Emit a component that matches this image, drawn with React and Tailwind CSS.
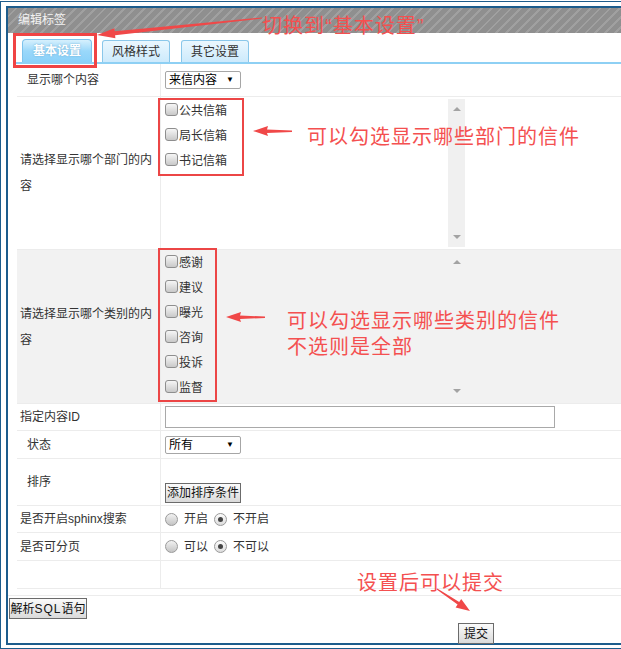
import React from 'react';

const FONT = "font-['Liberation_Sans','Noto_Sans_CJK_SC',sans-serif]";

const Checkbox = () => (
  <span className="mt-[4px] w-[13px] h-[13px] shrink-0 rounded-[3px] border border-[#8e8e8e] bg-gradient-to-b from-[#f6f6f6] to-[#c9c9c9]" />
);

const CheckItem = ({ label }) => (
  <div className="flex items-start h-[25px]">
    <Checkbox />
    <span className="ml-px leading-[25px] text-[12px] text-[#333]">{label}</span>
  </div>
);

const Radio = ({ checked }) => (
  <span
    className={`w-[13px] h-[13px] rounded-full border border-[#9a9a9a] flex items-center justify-center ${
      checked ? 'bg-gradient-to-b from-[#fdfdfd] to-[#dcdcdc]' : 'bg-gradient-to-b from-[#f2f2f2] to-[#c4c4c4]'
    }`}
  >
    {checked && <span className="w-[5px] h-[5px] rounded-full bg-[#444]" />}
  </span>
);

const FakeSelect = ({ value }) => (
  <div className="w-[76px] h-[18px] border border-[#a6a6a6] rounded-[2px] bg-white flex items-center justify-between pl-[3px] pr-[6px]">
    <span className="text-[12px] leading-[16px] text-black">{value}</span>
    <span className="text-[8px] leading-none text-black">▼</span>
  </div>
);

const ScrollTrack = ({ bg }) => (
  <div className={`w-[17px] my-[2px] flex flex-col justify-between items-center py-[8px] ${bg}`}>
    <span className="w-0 h-0 border-l-[4px] border-r-[4px] border-b-[4px] border-l-transparent border-r-transparent border-b-[#a3a3a3]" />
    <span className="w-0 h-0 border-l-[4px] border-r-[4px] border-t-[4px] border-l-transparent border-r-transparent border-t-[#a3a3a3]" />
  </div>
);

const Row = ({ label, indent, height, gray, children, labelLines }) => (
  <div className={`flex border-b border-[#ececec] ${gray ? 'bg-[#f2f2f2]' : ''} ${height}`}>
    <div
      className={`w-[144px] shrink-0 border-r border-[#ececec] flex items-center pr-[8px] text-[12px] text-[#333] ${
        indent ? 'pl-[10px]' : 'pl-[3px]'
      } ${labelLines ? 'leading-[26px]' : 'leading-[16px]'}`}
    >
      <span>{label}</span>
    </div>
    <div className="flex-1 flex">{children}</div>
  </div>
);

const Button = ({ children, className = '' }) => (
  <div
    className={`h-[20px] border border-[#6b6b6b] bg-gradient-to-b from-[#fbfbfb] to-[#dadada] flex items-center justify-center text-[12px] leading-none text-[#111] whitespace-nowrap ${className}`}
  >
    <span>{children}</span>
  </div>
);

export default function App() {
  const depts = ['公共信箱', '局长信箱', '书记信箱'];
  const kinds = ['感谢', '建议', '曝光', '咨询', '投诉', '监督'];

  return (
    <div className={`relative w-[621px] h-[649px] overflow-hidden bg-white ${FONT}`}>
      {/* outer frame */}
      <div className="mt-px w-[640px] h-[648px] border-l border-t border-b border-[#1d5c8c] pl-[5px] pt-[4px]">
        {/* inner panel */}
        <div className="h-[639px] border-l-2 border-t-2 border-b-2 border-[#1d5c8c]">
          {/* header */}
          <div className="h-[25px] pl-[10px] text-[12px] leading-[25px] text-[#f2f2f2] bg-[repeating-linear-gradient(135deg,#8f8f8f_0px,#8f8f8f_5px,#a0a0a0_5px,#a0a0a0_7px)]">
            编辑标签
          </div>

          {/* tabs */}
          <div className="ml-[6px] h-[31px] border-b-2 border-[#8ed0f4] flex items-end pl-[8px]">
            <div className="w-[70px] h-[23px] rounded-t-[4px] border border-b-0 border-[#7cc3ec] bg-gradient-to-b from-[#d6f0fd] via-[#9ad8fa] to-[#8ad1f9] flex items-center justify-center text-[12px] font-bold text-white [text-shadow:0_0_2px_#6aaad0]">
              基本设置
            </div>
            <div className="ml-[10px] w-[68px] h-[22px] rounded-t-[3px] border border-b-0 border-[#8ac7ea] bg-gradient-to-b from-[#eaf7fe] to-[#cdeafc] flex items-center justify-center text-[12px] text-[#333]">
              风格样式
            </div>
            <div className="ml-[11px] w-[68px] h-[22px] rounded-t-[3px] border border-b-0 border-[#8ac7ea] bg-gradient-to-b from-[#eaf7fe] to-[#cdeafc] flex items-center justify-center text-[12px] text-[#333]">
              其它设置
            </div>
          </div>

          {/* form table */}
          <div className="ml-[9px]">
            <Row label="显示哪个内容" indent height="h-[33px]">
              <div className="pl-[4px] flex items-center">
                <FakeSelect value="来信内容" />
              </div>
            </Row>

            <Row label="请选择显示哪个部门的内容" labelLines height="h-[153px]">
              <div className="w-[287px] pl-[4px] pt-[2px]">
                {depts.map((d) => (
                  <CheckItem key={d} label={d} />
                ))}
              </div>
              <ScrollTrack bg="bg-[#f0f0f0]" />
            </Row>

            <Row label="请选择显示哪个类别的内容" labelLines gray height="h-[154px]">
              <div className="w-[287px] pl-[4px] pt-[1px]">
                {kinds.map((k) => (
                  <CheckItem key={k} label={k} />
                ))}
              </div>
              <ScrollTrack bg="bg-[#f2f2f2]" />
            </Row>

            <Row label="指定内容ID" height="h-[27px]">
              <div className="pl-[4px] flex items-center">
                <div className="w-[390px] h-[22px] border border-[#a9a9a9] bg-white" />
              </div>
            </Row>

            <Row label="状态" indent height="h-[28px]">
              <div className="pl-[4px] flex items-center">
                <FakeSelect value="所有" />
              </div>
            </Row>

            <Row label="排序" indent height="h-[47px]">
              <div className="pl-[4px] flex items-end pb-[2px]">
                <Button className="w-[76px] h-[18px]">添加排序条件</Button>
              </div>
            </Row>

            <Row label="是否开启sphinx搜索" height="h-[27px]">
              <div className="pl-[4px] flex items-center text-[12px] text-[#333]">
                <Radio />
                <span className="ml-[6px]">开启</span>
                <span className="ml-[6px]"><Radio checked /></span>
                <span className="ml-[6px]">不开启</span>
              </div>
            </Row>

            <Row label="是否可分页" height="h-[28px]">
              <div className="pl-[4px] flex items-center text-[12px] text-[#333]">
                <Radio />
                <span className="ml-[6px]">可以</span>
                <span className="ml-[6px]"><Radio checked /></span>
                <span className="ml-[6px]">不可以</span>
              </div>
            </Row>

            <Row label="" height="h-[28px]" />
          </div>

          <div className="mt-[6px] border-t border-[#ececec]" />
          <Button className="ml-px mt-[2px] w-[78px] h-[21px]">
            解析<span className="tracking-[1px]">SQL</span>语句
          </Button>
          <Button className="ml-[450px] mt-[4px] w-[36px] h-[21px]">提交</Button>
        </div>
      </div>

      {/* annotations */}
      <div className="absolute left-[13px] top-[33px] w-[84px] h-[35px] border-[3px] border-[#f04444]" />
      <div className="absolute left-[158px] top-[98px] w-[86px] h-[78px] border-2 border-[#ec4646]" />
      <div className="absolute left-[158px] top-[248px] w-[59px] h-[154px] border-2 border-[#ec4646]" />

      <div className="absolute left-[262px] top-[15px] text-[20px] leading-[22px] tracking-[1px] text-[#f45050]">
        切换到“基本设置”
      </div>
      <div className="absolute left-[307px] top-[127px] text-[20px] leading-[20px] tracking-[1px] text-[#f45050]">
        可以勾选显示哪些部门的信件
      </div>
      <div className="absolute left-[287px] top-[308px] text-[20px] leading-[26px] tracking-[1px] text-[#f45050]">
        可以勾选显示哪些类别的信件
        <br />
        不选则是全部
      </div>
      <div className="absolute left-[357px] top-[573px] text-[20px] leading-[20px] tracking-[1px] text-[#f45050]">
        设置后可以提交
      </div>

      <svg className="absolute inset-0 pointer-events-none" width="621" height="649">
        <polygon
          fill="#f04848"
          points="97,35 115.4,38.2 115.1,35.2 262,18.5 262,17.5 114.7,31.2 114.4,28.2"
        />
        <polygon
          fill="#f04848"
          points="253,131 268,126 267,129.5 292,130.5 292,132 267,133 268,136"
        />
        <polygon
          fill="#f04848"
          points="226,317 241,312 240,315.5 265,316.5 265,318 240,319 241,322"
        />
        <polygon
          fill="#f04848"
          points="470,611 455.6,607.4 457.6,604.5 436.7,589.4 437.3,588.6 459.2,601.9 461.2,599"
        />
      </svg>
    </div>
  );
}
